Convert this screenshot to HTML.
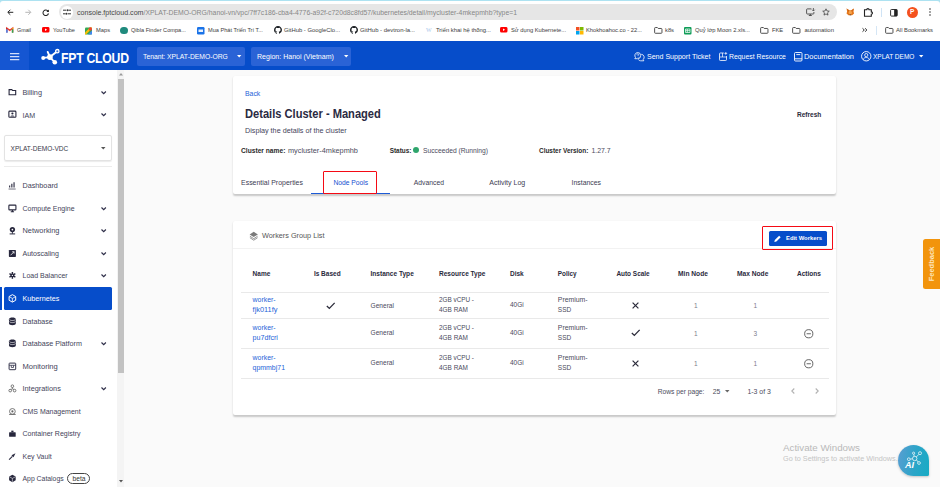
<!DOCTYPE html>
<html lang="en">
<head>
<meta charset="utf-8">
<title>FPT Cloud - Details Cluster</title>
<style>
*{box-sizing:border-box;margin:0;padding:0}
html,body{width:940px;height:487px;overflow:hidden;background:#fafafa}
body{position:relative;font-family:"Liberation Sans",sans-serif;font-size:6.5px;color:#3b3b3b}
.a{position:absolute}
svg{position:absolute;overflow:visible}

.t{position:absolute;white-space:nowrap;line-height:12px;height:12px;font-size:10px}
.u1{color:#464646}.u2{color:#868686}
.bm{color:#3c3c3c}
.ht{color:#fff}
.st{color:#44445a}
.b{font-weight:bold}
.lk{color:#2463d8}
.sub{color:#44445a}
.td{color:#4b4b5c}
.th{font-weight:bold;color:#2a2a3c}
.tab{color:#3c3c52}
.aw{color:#b9b9b9}
.aw2{color:#c4c4c4}

#topline{left:0;top:0;width:940px;height:5px;background:#ade2f1}
#chrome{left:0;top:1.100px;width:940px;height:40px;background:#fff;border-radius:3px 3px 0 0}
#url{left:59px;top:3.700px;width:778px;height:16.800px;border-radius:9px;background:#e6e6e6}
#hdr{left:0;top:40.700px;width:940px;height:29px;background:#064dca}
#hdrl{left:0;top:40.700px;width:29px;height:29px;background:#1556d2}
.hbtn{position:absolute;background:#2a63d6;border-radius:2px;height:18.5px;top:47px}
#side{left:0;top:70px;width:117px;height:417px;background:#fff}
#sbtrack{left:117px;top:70px;width:7px;height:417px;background:#f4f4f4}
#sbthumb{left:117.5px;top:79px;width:6.5px;height:294px;background:#c2c2c2}
.card{background:#fff;border-radius:2px;box-shadow:0 1.200px 1.800px rgba(0,0,0,.2)}
.hl{position:absolute;height:1px;background:#e9e9e9}
</style>
</head>
<body>
<div class="a" id="topline"></div>
<div class="a" id="chrome"></div>
<div class="a" id="url"></div>
<!-- nav arrows -->
<svg style="left:7.400px;top:8.800px" width="6.600" height="6.600" viewBox="0 0 10 10"><path d="M9.500 5H1.600M5 1.200L1.200 5 5 8.800" fill="none" stroke="#222" stroke-width="1.500"/></svg>
<svg style="left:25px;top:8.800px" width="6.600" height="6.600" viewBox="0 0 10 10"><path d="M.5 5h7.900M5 1.200L8.800 5 5 8.800" fill="none" stroke="#b4b4b4" stroke-width="1.500"/></svg>
<svg style="left:42.300px;top:8.600px" width="7.400" height="7.400" viewBox="0 0 10 10"><path d="M8.200 3.200A3.700 3.700 0 1 0 8.700 5.800" fill="none" stroke="#222" stroke-width="1.400"/><path d="M9.300 .8v3.300H6z" fill="#222"/></svg>
<div class="a" style="left:60.5px;top:6px;width:12.5px;height:12.5px;border-radius:7px;background:#fff"></div>
<svg style="left:63px;top:9.3px" width="8" height="6" viewBox="0 0 8 6"><path d="M0 1.2h3.2M5.8 1.2H8M0 4.8h2.2M4.8 4.8H8" stroke="#333" stroke-width="1"/><circle cx="4.6" cy="1.2" r="1" fill="#333"/><circle cx="3.4" cy="4.8" r="1" fill="#333"/></svg>
<!-- right toolbar icons -->
<svg style="left:806px;top:8.300px" width="9" height="8" viewBox="0 0 9 8"><path d="M5.400 .9H1.300a.7.700 0 0 0-.7.700v3.700a.7.700 0 0 0 .7.700h5.900a.7.700 0 0 0 .7-.7V4" fill="none" stroke="#444" stroke-width=".9"/><path d="M2.800 7.500h3M4.300 6v1.500" stroke="#444" stroke-width=".9"/><path d="M7.400 0v2.800M6.100 1.700l1.300 1.300 1.300-1.300" fill="none" stroke="#444" stroke-width=".8"/></svg>
<svg style="left:822px;top:8px" width="8" height="8" viewBox="0 0 10 10"><path d="M5 1l1.2 2.7 2.9.3-2.2 2 .6 2.9L5 7.4 2.5 8.9l.6-2.9-2.2-2 2.9-.3z" fill="none" stroke="#333" stroke-width=".9"/></svg>
<svg style="left:846px;top:8.300px" width="8.600" height="8" viewBox="0 0 10 10"><path d="M.3 .6l3.400 2.200h2.600L9.700 .6 9 4.400l.7 2.600-2.400 2.200H2.700L.3 7 1 4.400z" fill="#e4761b"/><path d="M3.700 2.800h2.600l.9 3.600L5 8.600 2.800 6.400z" fill="#f5a24b"/><path d="M.3 .6l3.400 2.200-.6 2zM9.700 .6L6.300 2.800l.6 2z" fill="#c9621a"/><path d="M4 8.200h2l-.3 1H4.300z" fill="#3b2b22"/></svg>
<svg style="left:863px;top:7px" width="10" height="10" viewBox="0 0 10 10"><path d="M1.500 2.800h2.200a1.200 1.200 0 1 1 2.400 0h2.200v2.100a1.200 1.200 0 1 1 0 2.400v1.900H1.500z" fill="none" stroke="#222" stroke-width="1.100"/></svg>
<div class="a" style="left:880.5px;top:8px;width:1px;height:9px;background:#cfe3f5"></div>
<svg style="left:890.400px;top:8.600px" width="7.800" height="7.600" viewBox="0 0 9 9"><rect x=".6" y=".6" width="7.800" height="7.800" rx="1" fill="none" stroke="#222" stroke-width="1.100"/><rect x="4.800" y=".6" width="3.600" height="7.800" fill="#222"/></svg>
<div class="a" style="left:907px;top:7px;width:10.500px;height:10.500px;border-radius:6px;background:#f4511e"></div>
<span class="a" style="left:910px;top:8.300px;font-size:6.500px;line-height:8px;color:#fff;font-weight:bold">P</span>
<svg style="left:928.700px;top:8.300px" width="2" height="8" viewBox="0 0 2 8"><circle cx="1" cy="1" r=".8" fill="#333"/><circle cx="1" cy="4" r=".8" fill="#333"/><circle cx="1" cy="7" r=".8" fill="#333"/></svg>
<!-- bookmark icons -->
<svg style="left:6.300px;top:27px" width="7.500" height="5.800" viewBox="0 0 7.500 5.800"><path d="M.9 5.400V1.200L3.750 3.400 6.600 1.200v4.200" fill="none" stroke="#ea4335" stroke-width="1.500"/><path d="M.9 5.800V2.300" stroke="#4285f4" stroke-width="1.500"/><path d="M6.600 5.800V2.300" stroke="#34a853" stroke-width="1.500"/><path d="M5.850 1.750L7.350 .6v1.700z" fill="#fbbc04"/><path d="M1.650 1.750L.15 .6v1.700z" fill="#c5221f"/></svg>
<svg style="left:42px;top:27.200px" width="7.500" height="5.600" viewBox="0 0 7.500 5.600"><rect width="7.500" height="5.600" rx="1.500" fill="#f00"/><path d="M3 1.600v2.400l2.100-1.200z" fill="#fff"/></svg>
<svg style="left:85px;top:26.500px" width="7" height="7.500" viewBox="0 0 7 7.500"><rect y=".5" width="7" height="7" rx="1" fill="#34a853"/><path d="M0 5.500L5 .5h2v1L1 7.500H0z" fill="#fbbc04"/><path d="M3 7.500l4-4v4z" fill="#4285f4"/><circle cx="5.300" cy="2" r="1.700" fill="#ea4335"/></svg>
<div class="a" style="left:120px;top:26.500px;width:7.500px;height:7.500px;border-radius:4px;background:#1f8a7d"></div>
<svg style="left:197px;top:26.500px" width="7.500" height="7.500" viewBox="0 0 7.500 7.500"><rect width="7.500" height="7.500" rx="1.200" fill="#1a73e8"/><rect x="1.500" y="2.500" width="4.500" height="2.500" fill="#fff" opacity=".9"/></svg>
<svg style="left:273.500px;top:26.300px" width="8" height="8" viewBox="0 0 16 16"><path fill="#1b1f23" d="M8 0C3.580 0 0 3.580 0 8c0 3.540 2.290 6.530 5.470 7.590.4.070.55-.17.55-.38 0-.19-.01-.82-.01-1.490-2.010.37-2.530-.49-2.690-.94-.09-.23-.48-.94-.82-1.130-.28-.15-.68-.52-.01-.53.63-.01 1.080.58 1.230.82.720 1.210 1.870.87 2.330.66.070-.52.280-.87.510-1.070-1.780-.2-3.640-.89-3.640-3.950 0-.87.310-1.590.82-2.150-.08-.2-.36-1.020.08-2.120 0 0 .67-.21 2.200.82.640-.18 1.320-.27 2-.27s1.360.09 2 .27c1.530-1.040 2.200-.82 2.200-.82.440 1.100.16 1.920.08 2.120.51.560.82 1.270.82 2.150 0 3.070-1.870 3.750-3.650 3.950.29.250.54.730.54 1.480 0 1.070-.01 1.930-.01 2.200 0 .21.150.46.550.38A8.013 8.013 0 0 0 16 8c0-4.420-3.580-8-8-8z"/></svg>
<svg style="left:349.500px;top:26.300px" width="8" height="8" viewBox="0 0 16 16"><path fill="#1b1f23" d="M8 0C3.580 0 0 3.580 0 8c0 3.540 2.290 6.530 5.470 7.590.4.070.55-.17.55-.38 0-.19-.01-.82-.01-1.490-2.010.37-2.530-.49-2.690-.94-.09-.23-.48-.94-.82-1.130-.28-.15-.68-.52-.01-.53.63-.01 1.080.58 1.230.82.720 1.210 1.870.87 2.330.66.070-.52.280-.87.510-1.070-1.780-.2-3.640-.89-3.640-3.950 0-.87.310-1.590.82-2.150-.08-.2-.36-1.020.08-2.120 0 0 .67-.21 2.200.82.640-.18 1.320-.27 2-.27s1.360.09 2 .27c1.530-1.040 2.200-.82 2.200-.82.440 1.100.16 1.920.08 2.120.51.560.82 1.270.82 2.150 0 3.070-1.870 3.750-3.650 3.950.29.250.54.730.54 1.480 0 1.070-.01 1.930-.01 2.200 0 .21.150.46.550.38A8.013 8.013 0 0 0 16 8c0-4.420-3.580-8-8-8z"/></svg>
<span class="a" style="left:426px;top:26px;font-size:6px;line-height:8px;color:#a9c6ea;font-family:'Liberation Serif',serif">W</span>
<svg style="left:500px;top:27.200px" width="7.500" height="5.600" viewBox="0 0 7.500 5.600"><rect width="7.500" height="5.600" rx="1.500" fill="#f00"/><path d="M3 1.600v2.400l2.100-1.200z" fill="#fff"/></svg>
<svg style="left:575.500px;top:26.500px" width="7.500" height="7.500" viewBox="0 0 7.500 7.500"><rect width="3.500" height="3.500" fill="#f25022"/><rect x="4" width="3.500" height="3.500" fill="#7fba00"/><rect y="4" width="3.500" height="3.500" fill="#00a4ef"/><rect x="4" y="4" width="3.500" height="3.500" fill="#ffb900"/></svg>
<svg style="left:683.500px;top:26.500px" width="7.500" height="7.500" viewBox="0 0 7.500 7.500"><rect width="7.500" height="7.500" rx="1" fill="#0f9d58"/><path d="M1.500 2h4.500v3.500H1.500zM1.500 3.700h4.500M3.300 2v3.500" fill="none" stroke="#fff" stroke-width=".7"/></svg>
<svg class="fold" style="left:653.500px;top:26.800px" width="8.600" height="6.800" viewBox="0 0 8 6.500"><path d="M.5 1.200a.7.7 0 0 1 .7-.7h1.900l.8.900h2.900a.7.700 0 0 1 .7.700v3.200a.7.700 0 0 1-.7.700H1.200a.7.700 0 0 1-.7-.7z" fill="none" stroke="#444" stroke-width=".9"/></svg>
<svg class="fold" style="left:760px;top:26.800px" width="8.600" height="6.800" viewBox="0 0 8 6.500"><path d="M.5 1.200a.7.7 0 0 1 .7-.7h1.900l.8.900h2.900a.7.700 0 0 1 .7.700v3.200a.7.700 0 0 1-.7.700H1.200a.7.700 0 0 1-.7-.7z" fill="none" stroke="#444" stroke-width=".9"/></svg>
<svg class="fold" style="left:792px;top:26.800px" width="8.600" height="6.800" viewBox="0 0 8 6.500"><path d="M.5 1.200a.7.7 0 0 1 .7-.7h1.900l.8.900h2.900a.7.700 0 0 1 .7.700v3.200a.7.700 0 0 1-.7.700H1.200a.7.700 0 0 1-.7-.7z" fill="none" stroke="#444" stroke-width=".9"/></svg>
<svg class="fold" style="left:884.500px;top:26.800px" width="8.600" height="6.800" viewBox="0 0 8 6.500"><path d="M.5 1.200a.7.7 0 0 1 .7-.7h1.900l.8.900h2.900a.7.700 0 0 1 .7.700v3.200a.7.700 0 0 1-.7.700H1.200a.7.700 0 0 1-.7-.7z" fill="none" stroke="#444" stroke-width=".9"/></svg>
<div class="a" style="left:876px;top:25.500px;width:1px;height:9px;background:#d5e6f5"></div>

<svg style="left:862.300px;top:28.300px" width="5.600" height="4" viewBox="0 0 5.600 4"><path d="M.5 .3L2.300 2 .5 3.700M3.100 .3L4.900 2 3.100 3.700" fill="none" stroke="#333" stroke-width="1"/></svg>
<div class="a" id="hdr"></div>
<div class="a" id="hdrl"></div>
<!-- hamburger -->
<svg style="left:10.100px;top:52.700px" width="9.300" height="7.400" viewBox="0 0 9.300 7.400"><path d="M0 .7h9.300M0 3.700h9.300M0 6.700h9.300" stroke="#d3defa" stroke-width="1.300"/></svg>
<!-- logo -->
<svg style="left:41px;top:48.500px" width="19" height="16" viewBox="0 0 19 16"><path d="M2.200 8.900L8.900 8.100M8.900 8.100L16.300 2.200M8.900 8.100L13.800 13.300M8.900 8.100L6.700 2.900" stroke="#fff" stroke-width="1.900" fill="none" stroke-linecap="round"/><circle cx="2.200" cy="8.900" r="2" fill="#fff"/><circle cx="8.900" cy="8.100" r="2.900" fill="#fff"/><circle cx="16.300" cy="2.200" r="1.700" fill="#3a6fd8" stroke="#fff" stroke-width="1.300"/><circle cx="13.800" cy="13.300" r="2.300" fill="#fff"/></svg>
<span class="a" id="logo" style="left:61.300px;top:49.200px;width:68px;height:17px;overflow:visible"><span style="position:absolute;left:0;top:0;font-weight:bold;color:#fff;font-size:15.200px;line-height:17px;white-space:nowrap;transform-origin:0 50%;transform:scaleX(.805);letter-spacing:-.3px">FPT CLOUD</span></span>
<div class="hbtn" style="left:137px;width:108px"></div>
<div class="hbtn" style="left:251px;width:100.400px"></div>
<svg style="left:237px;top:55px" width="4.400" height="2.600" viewBox="0 0 5 3"><path d="M0 0h5L2.500 3z" fill="#fff"/></svg>
<svg style="left:343.500px;top:55px" width="4.400" height="2.600" viewBox="0 0 5 3"><path d="M0 0h5L2.500 3z" fill="#fff"/></svg>
<svg style="left:918.500px;top:55px" width="4.400" height="2.600" viewBox="0 0 5 3"><path d="M0 0h5L2.500 3z" fill="#fff"/></svg>
<!-- support icon -->
<svg style="left:634px;top:51.600px" width="10.500" height="9.500" viewBox="0 0 10.500 9.500"><path d="M3.600 .5a3.100 3.100 0 0 1 0 6.200H.8l.7-1.200A3.100 3.100 0 0 1 3.600 .5z" fill="none" stroke="#fff" stroke-width=".8"/><path d="M7.200 2.300a3 3 0 0 1 2 5.200l.6 1.300H6.600a3 3 0 0 1-2.300-1.300" fill="none" stroke="#fff" stroke-width=".8"/><path d="M2.800 2.700a.9.900 0 1 1 1.300.8v.6M4.100 5v.5" fill="none" stroke="#fff" stroke-width=".7"/></svg>
<!-- request icon -->
<svg style="left:718.500px;top:52px" width="8.500" height="9" viewBox="0 0 8.500 9"><path d="M4.800 1H1.300a.8.800 0 0 0-.8.800v5.900a.8.800 0 0 0 .8.800h5.400a.8.800 0 0 0 .8-.8V4" fill="none" stroke="#fff" stroke-width=".8"/><path d="M.5 5h7M3.500 1v4M6.800 0v2.800M5.400 1.400h2.800" stroke="#fff" stroke-width=".7" fill="none"/></svg>
<!-- doc icon -->
<svg style="left:794px;top:51.800px" width="8.500" height="9.500" viewBox="0 0 8.500 9.500"><rect x=".5" y=".5" width="7.500" height="8.500" rx="1" fill="none" stroke="#fff" stroke-width=".9"/><path d="M.5 6.800h7.500M2.300 2.600h3.900" stroke="#fff" stroke-width=".9"/></svg>
<!-- user icon -->
<svg style="left:861px;top:51px" width="10.500" height="10.500" viewBox="0 0 10.500 10.500"><circle cx="5.250" cy="5.250" r="4.700" fill="none" stroke="#fff" stroke-width=".9"/><circle cx="5.250" cy="4.100" r="1.600" fill="none" stroke="#fff" stroke-width=".8"/><path d="M2.200 8.600c.4-1.500 1.600-2.100 3.050-2.100s2.650.6 3.050 2.100" fill="none" stroke="#fff" stroke-width=".8"/></svg>

<div class="a" id="side"></div>
<div class="a" id="sbtrack"></div>
<div class="a" id="sbthumb"></div>
<!-- scrollbar arrows -->
<svg style="left:118.500px;top:72.500px" width="4" height="2.500" viewBox="0 0 4 2.500"><path d="M0 2.500L2 0l2 2.500z" fill="#9a9a9a"/></svg>
<svg style="left:118.500px;top:480px" width="4" height="2.500" viewBox="0 0 4 2.500"><path d="M0 0h4L2 2.500z" fill="#555"/></svg>
<!-- selected item -->
<div class="a" style="left:0;top:287.300px;width:1.800px;height:22.300px;background:#064dca"></div>
<div class="a" style="left:4.100px;top:287.300px;width:108.300px;height:22.300px;background:#064dca;border-radius:1.500px"></div>
<!-- VDC select -->
<div class="a" style="left:4.300px;top:134.700px;width:108px;height:26px;border:1px solid #e3e3e3;border-radius:2px;box-shadow:0 .5px 1px rgba(0,0,0,.08)"></div>
<svg style="left:100.900px;top:147px" width="4.500" height="2.500" viewBox="0 0 4.500 2.500"><path d="M0 0h4.500L2.250 2.500z" fill="#555"/></svg>
<div class="hl" style="left:4px;top:165.500px;width:108px;background:#ececec"></div>
<!-- beta pill -->
<div class="a" style="left:66.700px;top:473.300px;width:23.500px;height:10.500px;border:.8px solid #444;border-radius:5.500px"></div>
<svg style="left:7.600px;top:88.0px" width="8.800" height="8.800" viewBox="0 0 8 8"><path d="M1 1.500h2.500l.7.800H7v3.900H1z" fill="none" stroke="#27273d" stroke-width="1"/></svg>
<svg style="left:101.300px;top:91.0px" width="5.400" height="3.300" viewBox="0 0 5.400 3.300"><path d="M.5.500l2.200 2.200 2.200-2.200" fill="none" stroke="#30304a" stroke-width="1.200"/></svg>
<svg style="left:7.600px;top:110.3px" width="8.800" height="8.800" viewBox="0 0 8 8"><rect x=".8" y="1" width="6.400" height="5.600" rx=".8" fill="none" stroke="#27273d" stroke-width="1"/><circle cx="4" cy="3.200" r="1" fill="#27273d"/><path d="M2.200 5.800c.3-1 3.300-1 3.600 0z" fill="#27273d"/></svg>
<svg style="left:101.300px;top:113.3px" width="5.400" height="3.300" viewBox="0 0 5.400 3.300"><path d="M.5.500l2.200 2.200 2.200-2.200" fill="none" stroke="#30304a" stroke-width="1.200"/></svg>
<svg style="left:7.600px;top:181.0px" width="8.800" height="8.800" viewBox="0 0 8 8"><path d="M1.500 6V4M3.500 6V2.500M5.500 6V1.200" stroke="#27273d" stroke-width="1"/><path d="M.5 7.300h6.500" stroke="#27273d" stroke-width=".6"/></svg>
<svg style="left:7.600px;top:203.8px" width="8.800" height="8.800" viewBox="0 0 8 8"><rect x=".8" y="1" width="6.400" height="4.300" rx=".6" fill="none" stroke="#27273d" stroke-width="1"/><path d="M2.500 7h3M4 5.500V7" stroke="#27273d" stroke-width="1"/></svg>
<svg style="left:101.300px;top:206.8px" width="5.400" height="3.300" viewBox="0 0 5.400 3.300"><path d="M.5.500l2.200 2.200 2.200-2.200" fill="none" stroke="#30304a" stroke-width="1.200"/></svg>
<svg style="left:7.600px;top:226.3px" width="8.800" height="8.800" viewBox="0 0 8 8"><circle cx="4" cy="3.200" r="2.400" fill="#27273d"/><path d="M4 5.500v1.500M1.500 7.200h5" stroke="#27273d" stroke-width=".9"/><circle cx="4" cy="3.200" r=".8" fill="#fff"/></svg>
<svg style="left:101.300px;top:229.3px" width="5.400" height="3.300" viewBox="0 0 5.400 3.300"><path d="M.5.500l2.200 2.200 2.200-2.200" fill="none" stroke="#30304a" stroke-width="1.200"/></svg>
<svg style="left:7.600px;top:249.0px" width="8.800" height="8.800" viewBox="0 0 8 8"><rect x=".8" y=".8" width="6.400" height="6.400" rx=".6" fill="#27273d"/><path d="M2.500 5.500L5.500 2.500M3.800 2.500h1.700v1.700" stroke="#fff" stroke-width=".7" fill="none"/></svg>
<svg style="left:101.300px;top:252.0px" width="5.400" height="3.300" viewBox="0 0 5.400 3.300"><path d="M.5.500l2.200 2.200 2.200-2.200" fill="none" stroke="#30304a" stroke-width="1.200"/></svg>
<svg style="left:7.600px;top:271.3px" width="8.800" height="8.800" viewBox="0 0 8 8"><circle cx="4" cy="4" r="1.700" fill="#27273d"/><path d="M4 .9v6.200M1.300 2.450l5.400 3.100M1.300 5.550l5.400-3.100" stroke="#27273d" stroke-width="1.300"/><circle cx="4" cy="4" r=".6" fill="#fff"/></svg>
<svg style="left:101.300px;top:274.3px" width="5.400" height="3.300" viewBox="0 0 5.400 3.300"><path d="M.5.500l2.200 2.200 2.200-2.200" fill="none" stroke="#30304a" stroke-width="1.200"/></svg>
<svg style="left:7.600px;top:293.8px" width="8.800" height="8.800" viewBox="0 0 8 8"><path d="M4 .6L7 2.300v3.400L4 7.400 1 5.700V2.300z" fill="none" stroke="#fff" stroke-width=".9"/><path d="M4 4v3.200M4 4L1.200 2.500M4 4l2.800-1.500" stroke="#fff" stroke-width=".7"/></svg>
<svg style="left:7.600px;top:316.6px" width="8.800" height="8.800" viewBox="0 0 8 8"><path d="M.9 2C.9 1.100 2.300.500 4 .500s3.100.600 3.100 1.500v4c0 .9-1.400 1.500-3.100 1.500S.9 6.900.9 6z" fill="#27273d"/><path d="M1.300 2.300c.4.600 1.500.900 2.700.900s2.300-.3 2.700-.9M1.300 4.200c.4.600 1.500.900 2.700.900s2.300-.3 2.700-.9" fill="none" stroke="#fff" stroke-width=".6"/></svg>
<svg style="left:7.600px;top:339.2px" width="8.800" height="8.800" viewBox="0 0 8 8"><path d="M.9 2C.9 1.100 2.300.500 4 .500s3.100.600 3.100 1.500v4c0 .9-1.400 1.500-3.100 1.500S.9 6.900.9 6z" fill="#27273d"/><path d="M1.300 2.300c.4.600 1.500.900 2.700.900s2.300-.3 2.700-.9M1.300 4.200c.4.600 1.500.900 2.700.900s2.300-.3 2.700-.9" fill="none" stroke="#fff" stroke-width=".6"/></svg>
<svg style="left:101.300px;top:342.2px" width="5.400" height="3.300" viewBox="0 0 5.400 3.300"><path d="M.5.500l2.200 2.200 2.200-2.200" fill="none" stroke="#30304a" stroke-width="1.200"/></svg>
<svg style="left:7.600px;top:361.7px" width="8.800" height="8.800" viewBox="0 0 8 8"><rect x="1" y="1" width="6" height="6" rx=".6" fill="none" stroke="#33334a" stroke-width=".9"/><path d="M1 3h6M3 3v2h2V3" stroke="#33334a" stroke-width=".7" fill="none"/></svg>
<svg style="left:7.600px;top:384.2px" width="8.800" height="8.800" viewBox="0 0 8 8"><circle cx="4" cy="2" r="1.200" fill="none" stroke="#555" stroke-width=".7"/><circle cx="2" cy="6" r="1.200" fill="none" stroke="#555" stroke-width=".7"/><circle cx="6" cy="6" r="1.200" fill="none" stroke="#555" stroke-width=".7"/><path d="M4 3.200v1.300M2.500 5l1.500-.5 1.500.5" stroke="#555" stroke-width=".6" fill="none"/></svg>
<svg style="left:101.300px;top:387.2px" width="5.400" height="3.300" viewBox="0 0 5.400 3.300"><path d="M.5.500l2.200 2.200 2.200-2.200" fill="none" stroke="#30304a" stroke-width="1.200"/></svg>
<svg style="left:7.600px;top:406.7px" width="8.800" height="8.800" viewBox="0 0 8 8"><circle cx="4" cy="4" r="2.600" fill="none" stroke="#666" stroke-width=".8"/><circle cx="4" cy="4" r="1" fill="#666"/><path d="M1 6.800h6" stroke="#666" stroke-width=".8"/></svg>
<svg style="left:7.600px;top:429.3px" width="8.800" height="8.800" viewBox="0 0 8 8"><rect x="1" y="3" width="6" height="4" rx=".5" fill="#27273d"/><rect x="3" y="1.500" width="2" height="1.500" fill="#27273d"/></svg>
<svg style="left:7.600px;top:451.6px" width="8.800" height="8.800" viewBox="0 0 8 8"><path d="M1 7L4 4" stroke="#27273d" stroke-width="1"/><path d="M3.200 3L6.800 1.200 5 4.800z" fill="#27273d"/></svg>
<svg style="left:7.600px;top:474.0px" width="8.800" height="8.800" viewBox="0 0 8 8"><path d="M4 .6L7 2.300v3.400L4 7.400 1 5.700V2.300z" fill="#27273d"/><path d="M4 4v3.200M4 4L1.200 2.500M4 4l2.800-1.500" stroke="#fff" stroke-width=".5"/></svg>

<div class="a card" id="card1" style="left:233px;top:76.200px;width:603.200px;height:117.600px"></div>
<div class="a card" id="card2" style="left:233px;top:221.200px;width:603.200px;height:193.800px"></div>
<!-- status dot -->
<div class="a" style="left:413px;top:147.100px;width:6.200px;height:6.200px;border-radius:3.100px;background:#2fa56c"></div>
<!-- tab underline + highlight rect -->
<div class="a" style="left:311px;top:192.500px;width:79px;height:1.300px;background:#1d5bd6"></div>
<div class="a" style="left:323px;top:171.200px;width:54.300px;height:22.600px;border:1.800px solid #f50a14;border-radius:1px"></div>
<!-- card2 header -->
<svg style="left:248.500px;top:230.500px" width="9.500" height="9.500" viewBox="0 0 9.500 9.500"><path d="M4.750 .8L8.900 3.400 4.750 6 .6 3.400z" fill="#7a7a7a"/><path d="M.9 5.200l3.850 2.500L8.600 5.200M.9 6.700l3.850 2.500L8.600 6.700" fill="none" stroke="#7a7a7a" stroke-width=".8"/></svg>
<div class="hl" style="left:233px;top:248.100px;width:603px;background:#f2f2f2"></div>
<!-- edit workers -->
<div class="a" style="left:768.800px;top:230.500px;width:58.400px;height:15.700px;border-radius:1.500px;background:#064dca"></div>
<svg style="left:773.800px;top:234.600px" width="7.400" height="7.400" viewBox="0 0 6.500 6.500"><path d="M.3 6.200l.4-1.800L4.500 .6l1.400 1.400-3.800 3.800z" fill="#fff"/></svg>
<div class="a" style="left:761.800px;top:226.300px;width:71.300px;height:24.200px;border:1.800px solid #f50a14;border-radius:1px"></div>
<!-- table lines -->
<div class="hl" style="left:241px;top:291.800px;width:588px"></div>
<div class="hl" style="left:241px;top:317.600px;width:588px"></div>
<div class="hl" style="left:241px;top:347.800px;width:588px"></div>
<div class="hl" style="left:241px;top:377.700px;width:588px"></div>
<!-- check / cross icons -->
<svg style="left:326.200px;top:301.800px" width="9.400" height="7.300" viewBox="0 0 9 7"><path d="M.8 3.800l2.400 2.300L8.300 .8" fill="none" stroke="#2b2b3a" stroke-width="1.250"/></svg>
<svg style="left:630.800px;top:329.300px" width="9.400" height="7.300" viewBox="0 0 9 7"><path d="M.8 3.800l2.400 2.300L8.300 .8" fill="none" stroke="#2b2b3a" stroke-width="1.250"/></svg>
<svg style="left:632px;top:301.800px" width="7" height="7" viewBox="0 0 7 7"><path d="M.6.600l5.800 5.800M6.400.600L.6 6.400" stroke="#2b2b3a" stroke-width="1.200"/></svg>
<svg style="left:632px;top:359.600px" width="7" height="7" viewBox="0 0 7 7"><path d="M.6.600l5.800 5.800M6.400.600L.6 6.400" stroke="#2b2b3a" stroke-width="1.200"/></svg>
<!-- action icons -->
<svg style="left:804px;top:328.700px" width="9.500" height="9.500" viewBox="0 0 9.500 9.500"><circle cx="4.750" cy="4.750" r="4.100" fill="none" stroke="#555" stroke-width=".9"/><path d="M2.600 4.750h4.300" stroke="#555" stroke-width=".9"/></svg>
<svg style="left:804px;top:358.500px" width="9.500" height="9.500" viewBox="0 0 9.500 9.500"><circle cx="4.750" cy="4.750" r="4.100" fill="none" stroke="#555" stroke-width=".9"/><path d="M2.600 4.750h4.300" stroke="#555" stroke-width=".9"/></svg>
<!-- pagination -->
<svg style="left:724.500px;top:390px" width="4.500" height="2.500" viewBox="0 0 4.500 2.500"><path d="M0 0h4.500L2.250 2.500z" fill="#666"/></svg>
<svg style="left:791px;top:388px" width="4" height="6" viewBox="0 0 4 6"><path d="M3.300.500L.8 3l2.500 2.500" fill="none" stroke="#b2b2b2" stroke-width="1.100"/></svg>
<svg style="left:814.500px;top:388px" width="4" height="6" viewBox="0 0 4 6"><path d="M.7.500L3.200 3 .7 5.500" fill="none" stroke="#b2b2b2" stroke-width="1.100"/></svg>
<!-- feedback tab -->
<div class="a" style="left:923px;top:239px;width:17px;height:49.800px;background:#f2940c;border-radius:2.500px 0 0 2.500px"></div>
<span class="a" style="left:923.500px;top:239px;width:17px;height:50px"><span style="position:absolute;left:50%;top:50%;transform:translate(-50%,-50%) rotate(-90deg);white-space:nowrap;color:#fde6bf;font-weight:bold;font-size:7.500px;line-height:8px">Feedback</span></span>
<!-- AI bubble -->
<div class="a" style="left:898px;top:444.500px;width:31px;height:31px;border-radius:15.500px 15.500px 1.500px 15.500px;background:linear-gradient(100deg,#5b9dd2 0%,#2ba5c8 55%,#17abc4 100%);box-shadow:0 1px 2.500px rgba(0,0,0,.22)"></div>
<svg style="left:898px;top:444.500px" width="31" height="31" viewBox="0 0 31 31"><g fill="none" stroke="#fff" stroke-width=".7"><circle cx="16.700" cy="13.500" r="2.200"/><circle cx="15.600" cy="8.200" r="1.100"/><circle cx="22" cy="8.200" r="1.500"/><circle cx="10.800" cy="14.200" r="1.400"/><circle cx="21" cy="18" r="1.400"/><path d="M16.200 11.300l-.4-2M18.300 12l2.600-2.700M14.500 13.800l-2.300.3M18.600 15l1.400 1.900"/></g></svg>
<span class="a" style="left:905px;top:460.300px;color:#fff;font-weight:bold;font-style:italic;font-size:9px;line-height:10px;letter-spacing:0">AI</span>

<span class="t u1" id="t0" style="left:77.0px;top:6.6px;font-size:7.08px;">console.fptcloud.com</span>
<span class="t u2" id="t1" style="left:143.5px;top:6.6px;font-size:6.85px;">/XPLAT-DEMO-ORG/hanoi-vn/vpc/7ff7c186-cba4-4776-a92f-c720d8c8fd57/kubernetes/detail/mycluster-4mkepmhb?type=1</span>
<span class="t bm" id="t2" style="left:17.0px;top:24.2px;font-size:5.36px;">Gmail</span>
<span class="t bm" id="t3" style="left:53.0px;top:24.3px;font-size:5.60px;">YouTube</span>
<span class="t bm" id="t4" style="left:96.0px;top:24.3px;font-size:5.75px;">Maps</span>
<span class="t bm" id="t5" style="left:131.0px;top:24.3px;font-size:5.62px;">Qibla Finder Compa...</span>
<span class="t bm" id="t6" style="left:208.0px;top:24.3px;font-size:5.60px;">Mua Phát Triển Trí T...</span>
<span class="t bm" id="t7" style="left:284.0px;top:24.3px;font-size:5.86px;">GitHub - GoogleClo...</span>
<span class="t bm" id="t8" style="left:360.0px;top:24.3px;font-size:5.93px;">GitHub - devtron-la...</span>
<span class="t bm" id="t9" style="left:436.0px;top:24.3px;font-size:5.88px;">Triển khai hệ thống...</span>
<span class="t bm" id="t10" style="left:511.0px;top:24.3px;font-size:5.75px;">Sử dụng Kubernete...</span>
<span class="t bm" id="t11" style="left:586.0px;top:24.3px;font-size:5.76px;">Khokhoahoc.co - 22...</span>
<span class="t bm" id="t12" style="left:665.0px;top:24.3px;font-size:5.75px;">k8s</span>
<span class="t bm" id="t13" style="left:695.0px;top:24.3px;font-size:5.79px;">Quỷ lớp Moon 2.xls...</span>
<span class="t bm" id="t14" style="left:772.0px;top:24.3px;font-size:5.75px;">FKE</span>
<span class="t bm" id="t15" style="left:804.5px;top:24.3px;font-size:5.96px;">automation</span>
<span class="t bm" id="t16" style="left:896.0px;top:24.3px;font-size:5.79px;">All Bookmarks</span>
<span class="t ht" id="t17" style="left:143.0px;top:51.0px;font-size:6.78px;">Tenant: XPLAT-DEMO-ORG</span>
<span class="t ht" id="t18" style="left:257.0px;top:51.0px;font-size:7.04px;">Region: Hanoi (Vietnam)</span>
<span class="t ht" id="t19" style="left:647.0px;top:51.0px;font-size:7.05px;">Send Support Ticket</span>
<span class="t ht" id="t20" style="left:729.0px;top:51.0px;font-size:6.88px;">Request Resource</span>
<span class="t ht" id="t21" style="left:804.0px;top:51.0px;font-size:7.43px;">Documentation</span>
<span class="t ht" id="t22" style="left:873.0px;top:51.0px;font-size:6.53px;">XPLAT DEMO</span>
<span class="t st" id="t23" style="left:22.5px;top:87.4px;font-size:7.31px;">Billing</span>
<span class="t st" id="t24" style="left:22.5px;top:110.1px;font-size:7.10px;">IAM</span>
<span class="t st" id="t25" style="left:22.5px;top:180.0px;font-size:7.22px;">Dashboard</span>
<span class="t st" id="t26" style="left:22.5px;top:202.8px;font-size:6.99px;">Compute Engine</span>
<span class="t st" id="t27" style="left:22.5px;top:225.3px;font-size:7.40px;">Networking</span>
<span class="t st" id="t28" style="left:22.5px;top:248.0px;font-size:7.06px;">Autoscaling</span>
<span class="t st" id="t29" style="left:22.5px;top:270.3px;font-size:7.01px;">Load Balancer</span>
<span class="t st" id="t30" style="left:22.5px;top:315.6px;font-size:7.05px;">Database</span>
<span class="t st" id="t31" style="left:22.5px;top:338.2px;font-size:7.18px;">Database Platform</span>
<span class="t st" id="t32" style="left:22.5px;top:360.8px;font-size:7.56px;">Monitoring</span>
<span class="t st" id="t33" style="left:22.5px;top:383.2px;font-size:7.33px;">Integrations</span>
<span class="t st" id="t34" style="left:22.5px;top:405.7px;font-size:6.98px;">CMS Management</span>
<span class="t st" id="t35" style="left:22.5px;top:428.3px;font-size:7.03px;">Container Registry</span>
<span class="t st" id="t36" style="left:22.5px;top:450.6px;font-size:6.97px;">Key Vault</span>
<span class="t st" id="t37" style="left:22.5px;top:473.0px;font-size:6.86px;">App Catalogs</span>
<span class="t st" id="t38" style="left:22.5px;top:292.9px;font-size:7.23px;color:#fff">Kubernetes</span>
<span class="t st" id="t39" style="left:10.6px;top:142.9px;font-size:6.56px;color:#3a3a4a">XPLAT-DEMO-VDC</span>
<span class="t bt" id="t40" style="left:72.6px;top:473.1px;font-size:6.68px;color:#333">beta</span>
<span class="t lk" id="t41" style="left:245.0px;top:87.9px;font-size:6.90px;">Back</span>
<span class="t b" id="t42" style="left:245.0px;top:107.5px;font-size:11.12px;color:#2a2a42;transform:scaleY(1.13);transform-origin:0 60%">Details Cluster - Managed</span>
<span class="t sub" id="t43" style="left:245.0px;top:124.7px;font-size:7.21px;">Display the details of the cluster</span>
<span class="t b" id="t44" style="left:797.0px;top:108.9px;font-size:6.52px;color:#2a2a3a">Refresh</span>
<span class="t b" id="t45" style="left:241.0px;top:145.1px;font-size:6.67px;color:#2a2a2a">Cluster name:</span>
<span class="t td" id="t46" style="left:288.0px;top:145.1px;font-size:7.32px;">mycluster-4mkepmhb</span>
<span class="t b" id="t47" style="left:389.7px;top:145.0px;font-size:6.43px;color:#2a2a2a">Status:</span>
<span class="t td" id="t48" style="left:423.0px;top:145.1px;font-size:6.72px;">Succeeded (Running)</span>
<span class="t b" id="t49" style="left:539.0px;top:145.0px;font-size:6.44px;color:#2a2a2a">Cluster Version:</span>
<span class="t td" id="t50" style="left:591.5px;top:145.1px;font-size:6.87px;">1.27.7</span>
<span class="t tab" id="t51" style="left:241.0px;top:176.9px;font-size:6.97px;">Essential Properties</span>
<span class="t tab" id="t52" style="left:333.4px;top:176.9px;font-size:6.73px;color:#164fcf">Node Pools</span>
<span class="t tab" id="t53" style="left:413.8px;top:176.9px;font-size:6.79px;">Advanced</span>
<span class="t tab" id="t54" style="left:489.3px;top:176.9px;font-size:7.04px;">Activity Log</span>
<span class="t tab" id="t55" style="left:571.6px;top:176.9px;font-size:6.87px;">Instances</span>
<span class="t td" id="t56" style="left:262.0px;top:229.9px;font-size:7.28px;color:#555">Workers Group List</span>
<span class="t b" id="t57" style="left:786.0px;top:232.2px;font-size:5.85px;color:#fff">Edit Workers</span>
<span class="t th" id="t58" style="left:252.6px;top:268.0px;font-size:6.50px;">Name</span>
<span class="t th" id="t59" style="left:313.9px;top:268.1px;font-size:6.51px;">Is Based</span>
<span class="t th" id="t60" style="left:370.5px;top:268.1px;font-size:6.57px;">Instance Type</span>
<span class="t th" id="t61" style="left:439.0px;top:268.1px;font-size:6.54px;">Resource Type</span>
<span class="t th" id="t62" style="left:510.0px;top:268.0px;font-size:6.50px;">Disk</span>
<span class="t th" id="t63" style="left:557.8px;top:268.0px;font-size:6.38px;">Policy</span>
<span class="t th" id="t64" style="left:616.4px;top:268.0px;font-size:6.44px;">Auto Scale</span>
<span class="t th" id="t65" style="left:678.0px;top:268.1px;font-size:6.67px;">Min Node</span>
<span class="t th" id="t66" style="left:737.0px;top:268.1px;font-size:6.65px;">Max Node</span>
<span class="t th" id="t67" style="left:797.0px;top:268.1px;font-size:6.54px;">Actions</span>
<span class="t lk" id="t68" style="left:252.6px;top:294.3px;font-size:6.90px;">worker-</span>
<span class="t lk" id="t69" style="left:252.6px;top:304.3px;font-size:7.38px;">fjk011fy</span>
<span class="t td" id="t70" style="left:370.5px;top:299.5px;font-size:6.61px;">General</span>
<span class="t td" id="t71" style="left:439.0px;top:294.2px;font-size:6.36px;">2GB vCPU -</span>
<span class="t td" id="t72" style="left:439.0px;top:304.2px;font-size:6.44px;">4GB RAM</span>
<span class="t td" id="t73" style="left:510.0px;top:299.4px;font-size:6.50px;">40Gi</span>
<span class="t td" id="t74" style="left:557.8px;top:294.3px;font-size:6.90px;">Premium-</span>
<span class="t td" id="t75" style="left:557.8px;top:304.2px;font-size:6.50px;">SSD</span>
<span class="t td" id="t76" style="left:693.9px;top:300.2px;font-size:6.50px;color:#7b7b8c">1</span>
<span class="t td" id="t77" style="left:753.5px;top:300.2px;font-size:6.50px;color:#7b7b8c">1</span>
<span class="t lk" id="t78" style="left:252.6px;top:322.3px;font-size:6.90px;">worker-</span>
<span class="t lk" id="t79" style="left:252.6px;top:332.3px;font-size:7.14px;">pu7dfcri</span>
<span class="t td" id="t80" style="left:370.5px;top:327.4px;font-size:6.61px;">General</span>
<span class="t td" id="t81" style="left:439.0px;top:322.2px;font-size:6.36px;">2GB vCPU -</span>
<span class="t td" id="t82" style="left:439.0px;top:332.2px;font-size:6.44px;">4GB RAM</span>
<span class="t td" id="t83" style="left:510.0px;top:327.3px;font-size:6.50px;">40Gi</span>
<span class="t td" id="t84" style="left:557.8px;top:322.3px;font-size:6.90px;">Premium-</span>
<span class="t td" id="t85" style="left:557.8px;top:332.2px;font-size:6.50px;">SSD</span>
<span class="t td" id="t86" style="left:693.9px;top:328.1px;font-size:6.50px;color:#7b7b8c">1</span>
<span class="t td" id="t87" style="left:753.5px;top:328.1px;font-size:6.50px;color:#7b7b8c">3</span>
<span class="t lk" id="t88" style="left:252.6px;top:352.1px;font-size:6.90px;">worker-</span>
<span class="t lk" id="t89" style="left:252.6px;top:362.1px;font-size:6.94px;">qpmmbj71</span>
<span class="t td" id="t90" style="left:370.5px;top:357.2px;font-size:6.61px;">General</span>
<span class="t td" id="t91" style="left:439.0px;top:352.0px;font-size:6.36px;">2GB vCPU -</span>
<span class="t td" id="t92" style="left:439.0px;top:362.0px;font-size:6.44px;">4GB RAM</span>
<span class="t td" id="t93" style="left:510.0px;top:357.1px;font-size:6.50px;">40Gi</span>
<span class="t td" id="t94" style="left:557.8px;top:352.1px;font-size:6.90px;">Premium-</span>
<span class="t td" id="t95" style="left:557.8px;top:362.0px;font-size:6.50px;">SSD</span>
<span class="t td" id="t96" style="left:693.9px;top:357.9px;font-size:6.50px;color:#7b7b8c">1</span>
<span class="t td" id="t97" style="left:753.5px;top:357.9px;font-size:6.50px;color:#7b7b8c">1</span>
<span class="t td" id="t98" style="left:657.7px;top:385.5px;font-size:6.68px;">Rows per page:</span>
<span class="t td" id="t99" style="left:712.8px;top:386.0px;font-size:6.83px;">25</span>
<span class="t td" id="t100" style="left:747.4px;top:385.5px;font-size:6.96px;">1-3 of 3</span>
<span class="t aw" id="t101" style="left:783.0px;top:441.6px;font-size:9.76px;">Activate Windows</span>
<span class="t aw2" id="t102" style="left:783.0px;top:453.3px;font-size:7.28px;">Go to Settings to activate Windows.</span>
</body>
</html>
